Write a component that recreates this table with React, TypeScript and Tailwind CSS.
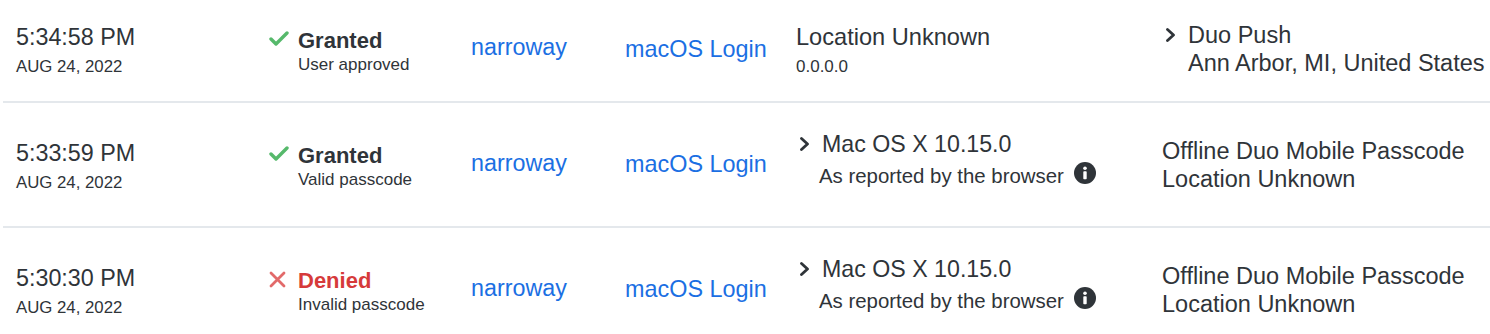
import React from "react";

interface LogRow {
  time: string;
  date: string;
  granted: boolean;
  reason: string;
  user: string;
  app: string;
  access: { title: string; sub: string; expandable: boolean; info: boolean };
  auth: { title: string; sub: string; expandable: boolean };
}

const rows: LogRow[] = [
  {
    time: "5:34:58 PM",
    date: "AUG 24, 2022",
    granted: true,
    reason: "User approved",
    user: "narroway",
    app: "macOS Login",
    access: { title: "Location Unknown", sub: "0.0.0.0", expandable: false, info: false },
    auth: { title: "Duo Push", sub: "Ann Arbor, MI, United States", expandable: true },
  },
  {
    time: "5:33:59 PM",
    date: "AUG 24, 2022",
    granted: true,
    reason: "Valid passcode",
    user: "narroway",
    app: "macOS Login",
    access: { title: "Mac OS X 10.15.0", sub: "As reported by the browser", expandable: true, info: true },
    auth: { title: "Offline Duo Mobile Passcode", sub: "Location Unknown", expandable: false },
  },
  {
    time: "5:30:30 PM",
    date: "AUG 24, 2022",
    granted: false,
    reason: "Invalid passcode",
    user: "narroway",
    app: "macOS Login",
    access: { title: "Mac OS X 10.15.0", sub: "As reported by the browser", expandable: true, info: true },
    auth: { title: "Offline Duo Mobile Passcode", sub: "Location Unknown", expandable: false },
  },
];

const Chevron = () => (
  <span className="flex-none w-[26px] flex items-center">
    <svg width="14" height="14" viewBox="0 0 14 14" className="ml-[3px]">
      <path d="M2.5 1.5 L8.5 7 L2.5 12.5" fill="none" stroke="#2f3439" strokeWidth="2.8" strokeLinecap="round" strokeLinejoin="round" />
    </svg>
  </span>
);

const InfoIcon = () => (
  <svg width="22" height="22" viewBox="0 0 22 22" className="ml-[10px] flex-none -translate-y-[3px]">
    <circle cx="11" cy="11" r="11" fill="#2f3439" />
    <circle cx="11" cy="6.3" r="1.8" fill="#ffffff" />
    <rect x="9.3" y="9.2" width="3.4" height="8" rx="0.8" fill="#ffffff" />
  </svg>
);

const CheckIcon = () => (
  <svg width="20" height="15" viewBox="0 0 20 15">
    <path d="M2 8 L7 13 L18 2" fill="none" stroke="#56b96b" strokeWidth="3.4" strokeLinecap="round" strokeLinejoin="round" />
  </svg>
);

const CrossIcon = () => (
  <svg width="17" height="17" viewBox="0 0 17 17">
    <path d="M2 2 L15 15 M15 2 L2 15" fill="none" stroke="#e26a6a" strokeWidth="2.8" strokeLinecap="round" />
  </svg>
);

export default function App() {
  return (
    <div
      className="w-[1490px] h-[334px] overflow-hidden bg-white text-[#2f3439]"
      style={{ fontFamily: '"Liberation Sans", Arial, sans-serif' }}
    >
      {rows.map((row, i) => (
        <div
          key={i}
          className={`ml-[3px] border-b-2 border-[#e4e8ec] pl-[13px] grid grid-cols-[253px_202px_154px_171px_366px_1fr] items-center ${
            i === 0 ? "-mt-[3px] h-[106px]" : "h-[125px]"
          }`}
        >
          <div className="flex flex-col pt-[3px]">
            <span className="text-[23.3px] leading-[28px]">{row.time}</span>
            <span className="text-[16.8px] leading-[22px] mt-[5px]">{row.date}</span>
          </div>

          <div className="flex items-start pt-[5px]">
            <span className="flex-none w-[20px] mr-[9px] mt-[3px] flex">
              {row.granted ? <CheckIcon /> : <CrossIcon />}
            </span>
            <div className="flex flex-col">
              <span className={`text-[22px] leading-[26px] font-bold ${row.granted ? "text-[#2f3439]" : "text-[#d63a3a]"}`}>
                {row.granted ? "Granted" : "Denied"}
              </span>
              <span className="text-[17px] leading-[22px]">{row.reason}</span>
            </div>
          </div>

          <div className="pb-[3px]">
            <span className="text-[23.3px] leading-[28px] text-[#1b6fe3]">{row.user}</span>
          </div>

          <div>
            <span className="text-[23.4px] leading-[28px] text-[#1b6fe3]">{row.app}</span>
          </div>

          {row.access.expandable ? (
            <div className="flex flex-col pb-[9px]">
              <div className="flex items-center">
                <Chevron />
                <span className="text-[23.2px] leading-[28px]">{row.access.title}</span>
              </div>
              <div className="flex items-center mt-[4px] pl-[23px]">
                <span className="text-[20.4px] leading-[28px]">{row.access.sub}</span>
                {row.access.info && <InfoIcon />}
              </div>
            </div>
          ) : (
            <div className="flex flex-col pt-[2px]">
              <span className="text-[23.6px] leading-[28px]">{row.access.title}</span>
              <span className="text-[17px] leading-[22px] mt-[5px]">{row.access.sub}</span>
            </div>
          )}

          <div className="flex flex-col text-[23.5px] leading-[28px]">
            {row.auth.expandable ? (
              <>
                <div className="flex items-center">
                  <Chevron />
                  <span>{row.auth.title}</span>
                </div>
                <span className="pl-[26px] whitespace-nowrap">{row.auth.sub}</span>
              </>
            ) : (
              <>
                <span className="whitespace-nowrap">{row.auth.title}</span>
                <span className="whitespace-nowrap">{row.auth.sub}</span>
              </>
            )}
          </div>
        </div>
      ))}
    </div>
  );
}
